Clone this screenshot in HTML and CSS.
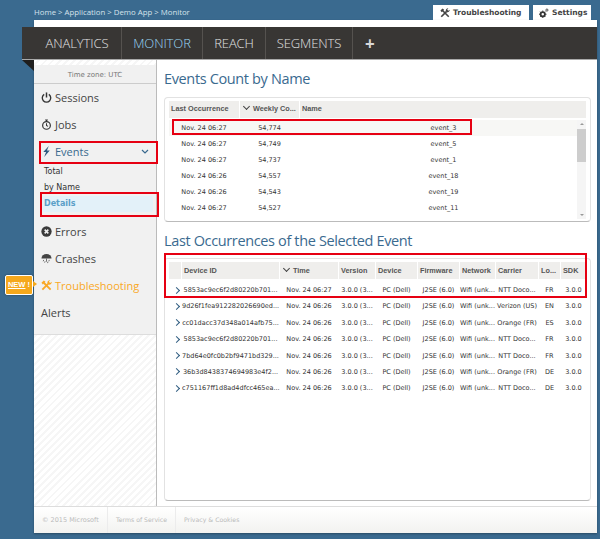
FILE: index.html
```html
<!DOCTYPE html>
<html lang="en">
  <head>
    <meta charset="UTF-8" />
    <title>Monitor - Demo App</title>
    <link rel="stylesheet" href="styles.css">
  </head>
  <body>
    <div class="page">
      <div class="topbar">
        <div class="breadcrumb">Home &gt; Application &gt; Demo App &gt; Monitor</div>
        <div class="tabs">
          <div class="tab tab-wide">
            <svg class="tab-icon" viewBox="0 0 12 12"><path d="M3 3 10.5 10.5" stroke="currentColor" stroke-width="2"/><path d="M0.5 3 3 .5 5 2 2 5Z" fill="currentColor"/><path d="M1.5 10.5 8 4" stroke="currentColor" stroke-width="2"/><path d="M7 3.5A2.6 2.6 0 0 1 10 .4L8.6 2l1.4 1.4 1.6-1.4A2.6 2.6 0 0 1 8.500 5Z" fill="currentColor"/></svg>
            Troubleshooting
          </div>
          <div class="tab">
            <svg class="tab-icon" viewBox="0 0 12 12"><circle cx="4.5" cy="7.5" r="2.6" fill="none" stroke="#333" stroke-width="2.2"/><path d="M4.5 3v1.5M4.5 10.5V12M0 7.5h1.5M7.500 7.5H9M1.4 4.4l1 1M6.6 9.6l1 1M1.4 10.6l1-1M6.6 5.4l1-1" stroke="#333" stroke-width="1.1"/><circle cx="9.5" cy="2.5" r="1.3" fill="none" stroke="#333" stroke-width="1"/></svg>
            Settings
          </div>
        </div>
      </div>

      <div class="shell">
        <div class="shell-gap"></div>
        <nav class="mainnav">
          <a class="nav-item nav-analytics">ANALYTICS</a>
          <a class="nav-item nav-monitor">MONITOR</a>
          <a class="nav-item nav-reach">REACH</a>
          <a class="nav-item nav-segments">SEGMENTS</a>
          <a class="nav-plus">+</a>
        </nav>
        <div class="fold"></div>

        <div class="body-row">
          <aside class="sidebar">
            <div class="menu">
              <div class="menu-top"></div>
              <div class="timezone">Time zone: UTC</div>
              <div class="menu-item">
                <svg class="menu-icon" viewBox="0 0 12 12"><path d="M3.500 2.600a4.600 4.600 0 1 0 5 0" fill="none" stroke="#333" stroke-width="1.5"/><path d="M6 .5v5.500" stroke="#333" stroke-width="1.6"/></svg>
                Sessions
              </div>
              <div class="menu-item">
                <svg class="menu-icon" viewBox="0 0 12 12"><circle cx="6" cy="7" r="4.200" fill="none" stroke="#333" stroke-width="1.3"/><path d="M6 4.500V7l1.600 1M4.500 1h3M6 1v1.500" fill="none" stroke="#333" stroke-width="1.1"/></svg>
                Jobs
              </div>
              <div class="menu-item menu-open">
                <svg class="menu-icon" viewBox="0 0 12 12"><path d="M8.500 0 2.500 6.500h3L3.500 12 9.500 4.800H6.500Z" fill="#2f5c80"/></svg>
                Events
                <svg class="chevron" viewBox="0 0 8 5"><path d="M1 1l3 3 3-3" fill="none" stroke="#3a6a8f" stroke-width="1.2"/></svg>
              </div>
              <div class="submenu">
                <div class="sub-item">Total</div>
                <div class="sub-item">by Name</div>
                <div class="sub-item sub-active">Details</div>
              </div>
              <div class="menu-item">
                <svg class="menu-icon" viewBox="0 0 12 12"><circle cx="6" cy="6" r="5.600" fill="#3b3b3b"/><path d="M4 4l4 4M8 4l-4 4" stroke="#f1f1f1" stroke-width="1.7"/></svg>
                Errors
              </div>
              <div class="menu-item">
                <svg class="menu-icon" viewBox="0 0 12 12"><path d="M0.500 6a5.500 5 0 0 1 11 0Z" fill="#444"/><path d="M6 6v3.500M3 7.500 2.400 9M9 7.500 8.600 9M4.500 9l-.5 1.500M7.500 9.500 7.200 11" stroke="#555" stroke-width=".9"/></svg>
                Crashes
              </div>
              <div class="menu-item menu-trouble">
                <span class="new-badge"><u>NEW</u> !</span>
                <svg class="menu-icon" viewBox="0 0 12 12"><path d="M3 3 10.500 10.500" stroke="currentColor" stroke-width="2"/><path d="M0.500 3 3 .5 5 2 2 5Z" fill="currentColor"/><path d="M1.500 10.500 8 4" stroke="currentColor" stroke-width="2"/><path d="M7 3.500A2.600 2.600 0 0 1 10 .4L8.600 2l1.400 1.400 1.600-1.400A2.600 2.600 0 0 1 8.500 5Z" fill="currentColor"/></svg>
                Troubleshooting
              </div>
              <div class="menu-item">Alerts</div>
            </div>
            <div class="hatch"></div>
          </aside>

          <main class="content">
            <h2 class="title title-first">Events Count by Name</h2>
            <section class="panel panel-events">
              <div class="head-row">
                <div class="th ev-last">Last Occurrence</div>
                <div class="th ev-count"><span class="sort"></span>Weekly Co...</div>
                <div class="th ev-name">Name</div>
              </div>
              <div class="scroll-wrap">
                <div class="ev-rows">
                  <div class="row row-selected"><span class="ev-last">Nov. 24 06:27</span><span class="ev-count">54,774</span><span class="ev-name ev-name-cell">event_3</span></div>
                  <div class="row"><span class="ev-last">Nov. 24 06:27</span><span class="ev-count">54,749</span><span class="ev-name ev-name-cell">event_5</span></div>
                  <div class="row"><span class="ev-last">Nov. 24 06:27</span><span class="ev-count">54,737</span><span class="ev-name ev-name-cell">event_1</span></div>
                  <div class="row"><span class="ev-last">Nov. 24 06:26</span><span class="ev-count">54,557</span><span class="ev-name ev-name-cell">event_18</span></div>
                  <div class="row"><span class="ev-last">Nov. 24 06:26</span><span class="ev-count">54,543</span><span class="ev-name ev-name-cell">event_19</span></div>
                  <div class="row"><span class="ev-last">Nov. 24 06:27</span><span class="ev-count">54,527</span><span class="ev-name ev-name-cell">event_11</span></div>
                </div>
                <div class="scrollbar">
                  <span class="arrow-up"></span>
                  <span class="thumb"></span>
                  <span class="arrow-down"></span>
                </div>
              </div>
            </section>

            <h2 class="title title-second">Last Occurrences of the Selected Event</h2>
            <section class="panel panel-occ">
              <div class="head-row">
                <div class="th c-exp"></div>
                <div class="th c-id">Device ID</div>
                <div class="th c-time"><span class="sort"></span>Time</div>
                <div class="th c-ver">Version</div>
                <div class="th c-dev">Device</div>
                <div class="th c-fw">Firmware</div>
                <div class="th c-net">Network</div>
                <div class="th c-car">Carrier</div>
                <div class="th c-loc">Lo...</div>
                <div class="th c-sdk">SDK</div>
              </div>
              <div class="occ-rows">
                <div class="row occ-row"><span class="c-exp"><i class="expander"></i></span><span class="c-id">5853ac9ec6f2d80220b701...</span><span class="c-time">Nov. 24 06:27</span><span class="c-ver">3.0.0 (3...</span><span class="c-dev">PC (Dell)</span><span class="c-fw">J2SE (6.0)</span><span class="c-net">Wifi (unk...</span><span class="c-car">NTT Doco...</span><span class="c-loc">FR</span><span class="c-sdk">3.0.0</span></div>
                <div class="row occ-row"><span class="c-exp"><i class="expander"></i></span><span class="c-id">9d26f1fea912282026690ed...</span><span class="c-time">Nov. 24 06:26</span><span class="c-ver">3.0.0 (3...</span><span class="c-dev">PC (Dell)</span><span class="c-fw">J2SE (6.0)</span><span class="c-net">Wifi (unk...</span><span class="c-car">Verizon (US)</span><span class="c-loc">EN</span><span class="c-sdk">3.0.0</span></div>
                <div class="row occ-row"><span class="c-exp"><i class="expander"></i></span><span class="c-id">cc01dacc37d348a014afb75...</span><span class="c-time">Nov. 24 06:26</span><span class="c-ver">3.0.0 (3...</span><span class="c-dev">PC (Dell)</span><span class="c-fw">J2SE (6.0)</span><span class="c-net">Wifi (unk...</span><span class="c-car">Orange (FR)</span><span class="c-loc">ES</span><span class="c-sdk">3.0.0</span></div>
                <div class="row occ-row"><span class="c-exp"><i class="expander"></i></span><span class="c-id">5853ac9ec6f2d80220b701...</span><span class="c-time">Nov. 24 06:26</span><span class="c-ver">3.0.0 (3...</span><span class="c-dev">PC (Dell)</span><span class="c-fw">J2SE (6.0)</span><span class="c-net">Wifi (unk...</span><span class="c-car">NTT Doco...</span><span class="c-loc">FR</span><span class="c-sdk">3.0.0</span></div>
                <div class="row occ-row"><span class="c-exp"><i class="expander"></i></span><span class="c-id">7bd64e0fc0b2bf9471bd329...</span><span class="c-time">Nov. 24 06:26</span><span class="c-ver">3.0.0 (3...</span><span class="c-dev">PC (Dell)</span><span class="c-fw">J2SE (6.0)</span><span class="c-net">Wifi (unk...</span><span class="c-car">NTT Doco...</span><span class="c-loc">FR</span><span class="c-sdk">3.0.0</span></div>
                <div class="row occ-row"><span class="c-exp"><i class="expander"></i></span><span class="c-id">36b3d8438374694983e4f2...</span><span class="c-time">Nov. 24 06:26</span><span class="c-ver">3.0.0 (3...</span><span class="c-dev">PC (Dell)</span><span class="c-fw">J2SE (6.0)</span><span class="c-net">Wifi (unk...</span><span class="c-car">Orange (FR)</span><span class="c-loc">DE</span><span class="c-sdk">3.0.0</span></div>
                <div class="row occ-row"><span class="c-exp"><i class="expander"></i></span><span class="c-id">c751167ff1d8ad4dfcc465ea...</span><span class="c-time">Nov. 24 06:26</span><span class="c-ver">3.0.0 (3...</span><span class="c-dev">PC (Dell)</span><span class="c-fw">J2SE (6.0)</span><span class="c-net">Wifi (unk...</span><span class="c-car">NTT Doco...</span><span class="c-loc">DE</span><span class="c-sdk">3.0.0</span></div>
              </div>
            </section>
          </main>
        </div>

        <footer class="footer">
          <span class="foot-item foot-first">&copy; 2015 Microsoft</span>
          <span class="foot-item foot-small">Terms of Service</span>
          <span class="foot-item foot-small foot-last">Privacy &amp; Cookies</span>
        </footer>
      </div>
    </div>

    <!-- red annotation boxes drawn over the screenshot -->
    <div class="mark mark-events"></div>
    <div class="mark mark-details"></div>
    <div class="mark mark-row"></div>
    <div class="mark mark-occ"></div>
  </body>
</html>
```

FILE: styles.css
```css
html,
body {
  margin: 0;
  height: 539px;
  overflow: hidden;
}
body {
  position: relative;
  background-color: #3a6a8f;
  font-family: "Open Sans", sans-serif;
  color: #333;
}
.page {
  width: 563px;
  margin-left: 34px;
}

/* top strip */
.topbar {
  height: 20px;
  display: flex;
  justify-content: space-between;
}
.breadcrumb {
  padding-top: 8px;
  font-size: 7.8px;
  line-height: 9px;
  color: #d6e3ec;
}
.tabs {
  display: flex;
  gap: 4px;
  margin-right: 6px;
  padding-top: 5px;
}
.tab {
  display: flex;
  align-items: center;
  gap: 3px;
  width: 58px;
  box-sizing: border-box;
  padding-left: 6px;
  background-color: #fff;
  font-family: "DejaVu Sans", sans-serif;
  font-size: 7.5px;
  font-weight: 700;
  color: #444;
  white-space: nowrap;
}
.tab-wide {
  width: 96px;
  padding-left: 7px;
}
.tab-icon {
  width: 10px;
  height: 10px;
  flex: none;
}

/* white shell */
.shell {
  position: relative;
  background-color: #fff;
  height: 513px;
  display: flex;
  flex-direction: column;
  box-shadow: 0 1px 2px rgba(0, 0, 0, 0.3);
}
.shell-gap {
  height: 7px;
}
.mainnav {
  display: flex;
  margin-left: -12px;
  background-color: #383634;
  border-bottom: 1px solid #aaa;
  box-sizing: border-box;
  height: 33px;
  font-size: 13px;
  font-weight: 300;
  letter-spacing: -0.1px;
  line-height: 33px;
}
.nav-item {
  box-sizing: border-box;
  text-align: center;
  color: #e2e2e2;
  border-right: 1px solid #55524f;
}
.nav-analytics {
  width: 100px;
  padding-left: 11px;
}
.nav-monitor {
  width: 81px;
  color: #9ad6f5;
}
.nav-reach {
  width: 63px;
}
.nav-segments {
  width: 87px;
}
.nav-plus {
  padding-left: 12px;
  font-size: 17px;
  font-weight: 700;
  color: #d8d8d8;
}
.fold {
  position: absolute;
  left: -12px;
  top: 40px;
  border-top: 11px solid #1f1e1d;
  border-left: 12px solid transparent;
}
.body-row {
  flex: 1;
  display: flex;
  min-height: 0;
  border-bottom: 1px solid #ddd;
}

/* sidebar */
.sidebar {
  width: 123px;
  flex: none;
  display: flex;
  flex-direction: column;
  box-sizing: border-box;
  border-right: 1px solid #bbb;
}
.menu {
  background-color: #f1f1f1;
  border-bottom: 1px solid #ddd;
  height: 274px;
  flex: none;
}
.menu-top {
  height: 5px;
  background: repeating-linear-gradient(-45deg, #f6f6f6 0 2px, #fff 2px 5px);
}
.timezone {
  height: 18px;
  text-align: center;
  font-family: "DejaVu Sans", sans-serif;
  font-size: 7px;
  line-height: 20px;
  color: #777;
  border-bottom: 1px solid #ccc;
}
.menu-item {
  position: relative;
  display: flex;
  align-items: center;
  gap: 3px;
  height: 27px;
  padding-left: 7px;
  font-size: 11px;
  color: #444;
}
.menu-icon {
  width: 11px;
  height: 11px;
  flex: none;
}
.menu-open {
  color: #3a6a8f;
}
.chevron {
  position: absolute;
  right: 7px;
  top: 11px;
  width: 8px;
  height: 5px;
}
.submenu {
  margin-top: -1px;
}
.sub-item {
  height: 16px;
  margin: 0 3px 0 8px;
  padding-left: 2px;
  font-family: "DejaVu Sans", sans-serif;
  font-size: 8px;
  line-height: 16px;
  color: #333;
}
.sub-active {
  background-color: #e3f1f9;
  border-radius: 2px;
  font-weight: 700;
  color: #5a9fc8;
}
.submenu + .menu-item {
  margin-top: 6px;
}
.menu-trouble {
  color: #f9a825;
}
.new-badge {
  position: absolute;
  left: -29px;
  top: 3px;
  width: 28px;
  height: 20px;
  box-sizing: border-box;
  background-color: #f5a81c;
  border: 1px solid #fff;
  border-radius: 2px;
  box-shadow: 0 0 2px rgba(0, 0, 0, 0.4);
  color: #fff;
  font-family: "Liberation Sans", sans-serif;
  font-size: 7.5px;
  font-weight: 700;
  line-height: 18px;
  text-align: center;
  white-space: nowrap;
}
.new-badge::after {
  content: "";
  position: absolute;
  right: -5px;
  top: 5px;
  border-left: 4px solid #f5a81c;
  border-top: 3px solid transparent;
  border-bottom: 3px solid transparent;
}
.hatch {
  flex: 1;
  background: repeating-linear-gradient(-45deg, #f6f6f6 0 2px, #fff 2px 5px);
}

/* content */
.content {
  flex: 1;
  padding: 0 6px 0 7px;
  min-width: 0;
}
.title {
  margin: 0;
  font-size: 14.5px;
  font-weight: 400;
  letter-spacing: -0.36px;
  line-height: 20px;
  color: #3a6a8f;
}
.title-first {
  padding-top: 9px;
}
.title-second {
  margin-top: 9px;
}
.panel {
  box-sizing: border-box;
  border: 1px solid #e2e2e2;
  border-bottom-color: #bbb;
  border-radius: 4px;
  padding: 3px 4px 0 4px;
  font-family: "DejaVu Sans", sans-serif;
  font-size: 6.5px;
  color: #333;
}
.panel-events {
  height: 125px;
  margin-top: 8px;
}
.panel-occ {
  height: 243px;
  margin-top: 7px;
}
.panel-occ .th {
  line-height: 18px;
}
.head-row {
  display: flex;
  gap: 1px;
  height: 17px;
}
.th {
  box-sizing: border-box;
  background-color: #efeeec;
  font-family: "Liberation Sans", sans-serif;
  font-size: 7.3px;
  font-weight: 700;
  line-height: 16px;
  padding-left: 2px;
  white-space: nowrap;
  overflow: hidden;
  color: #555;
}
.sort {
  display: inline-block;
  width: 4px;
  height: 4px;
  margin: 0 4px 2px 2px;
  border-right: 1px solid #444;
  border-bottom: 1px solid #444;
  transform: rotate(45deg);
}
.ev-last {
  width: 70px;
}
.ev-count {
  width: 59px;
}
.ev-name {
  flex: 1;
}
.ev-name-cell {
  padding-left: 10px;
}
.scroll-wrap {
  display: flex;
  height: 99px;
  margin-top: 2px;
}
.ev-rows {
  flex: 1;
}
.row {
  display: flex;
  height: 16px;
  line-height: 16px;
  gap: 1px;
  text-align: center;
  white-space: nowrap;
}
.row-selected {
  background-color: #f7f7f5;
}
.scrollbar {
  width: 9px;
  flex: none;
  background-color: #f5f5f5;
  display: flex;
  flex-direction: column;
  align-items: center;
  justify-content: space-between;
}
.thumb {
  width: 100%;
  height: 33px;
  margin-top: 1px;
  margin-bottom: auto;
  background-color: #cdcdcd;
}
.arrow-up,
.arrow-down {
  margin: 3px 0;
  border-left: 2px solid transparent;
  border-right: 2px solid transparent;
}
.arrow-up {
  border-bottom: 2px solid #999;
}
.arrow-down {
  border-top: 2px solid #999;
}
.occ-rows {
  margin-top: 3px;
}
.occ-row {
  height: 16.4px;
  line-height: 16.4px;
}
.c-exp {
  width: 12px;
}
.c-id {
  width: 97px;
}
.c-time {
  width: 58px;
}
.c-ver {
  width: 36px;
}
.c-dev {
  width: 41px;
}
.c-fw {
  width: 41px;
}
.c-net {
  width: 35px;
}
.c-car {
  width: 42px;
}
.c-loc {
  width: 21px;
}
.c-sdk {
  width: 25px;
}
.expander {
  display: inline-block;
  width: 4px;
  height: 4px;
  margin-left: 2px;
  vertical-align: -0.5px;
  border-right: 1.5px solid #2f5c80;
  border-top: 1.5px solid #2f5c80;
  transform: rotate(45deg);
}

/* footer */
.footer {
  display: flex;
  align-items: center;
  height: 26px;
  background: linear-gradient(#fff, #f2f2f0);
  font-family: "DejaVu Sans", sans-serif;
  font-size: 6.5px;
  color: #bbb;
}
.foot-item {
  padding: 0 8px;
  line-height: 26px;
  border-right: 1px solid #ececec;
}
.foot-first {
  width: 74px;
  box-sizing: border-box;
}
.foot-small {
  font-size: 6.2px;
}
.foot-last {
  border-right: none;
}

/* annotations */
.mark {
  position: absolute;
  box-sizing: border-box;
  border: 2px solid #e60012;
}
.mark-events {
  left: 39px;
  top: 141px;
  width: 119px;
  height: 23px;
}
.mark-details {
  left: 40px;
  top: 192px;
  width: 119px;
  height: 25px;
}
.mark-row {
  left: 172px;
  top: 119px;
  width: 300px;
  height: 16px;
}
.mark-occ {
  left: 164px;
  top: 253px;
  width: 423px;
  height: 45px;
}
```
